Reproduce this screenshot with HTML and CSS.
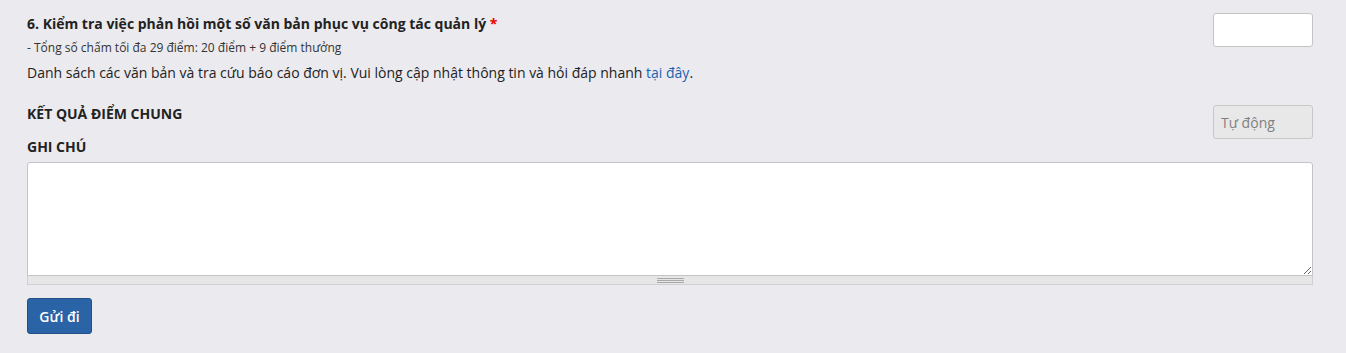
FILE: index.html
```html
<!DOCTYPE html>
<html lang="vi">
<head>
<meta charset="utf-8">
<title>Form</title>
<link rel="stylesheet" href="styles.css">
</head>
<body>
<form class="page">
  <div class="row question">
    <div class="q-text">
      <div class="q-title">6. Kiểm tra việc phản hồi một số văn bản phục vụ công tác quản lý <span class="req">*</span></div>
      <div class="q-sub">- Tổng số chấm tối đa 29 điểm: 20 điểm + 9 điểm thưởng</div>
      <div class="q-desc">Danh sách các văn bản và tra cứu báo cáo đơn vị. Vui lòng cập nhật thông tin và hỏi đáp nhanh <a href="#">tại đây</a>.</div>
    </div>
    <input class="score" type="text">
  </div>
  <div class="row total">
    <div class="label">KẾT QUẢ ĐIỂM CHUNG</div>
    <input class="score auto" type="text" placeholder="Tự động" disabled>
  </div>
  <div class="label note-label">GHI CHÚ</div>
  <div class="note">
    <textarea class="note-area"></textarea>
    <div class="grippie"><span></span></div>
  </div>
  <button class="submit" type="button">Gửi đi</button>
</form>
</body>
</html>
```
FILE: styles.css
```css
html, body {
  margin: 0;
  padding: 0;
  background: #ebeaef;
}
body {
  font-family: "Open Sans", "Liberation Sans", sans-serif;
  color: #222;
}
.page {
  padding: 13px 33px 19px 27px;
  display: flex;
  flex-direction: column;
}
.row {
  display: flex;
  justify-content: space-between;
  align-items: flex-start;
}
.q-title {
  font-size: 14px;
  font-weight: 700;
  line-height: 22px;
}
.req {
  color: #e00;
}
.q-sub {
  font-size: 12px;
  line-height: 18px;
  margin-top: 4px;
  color: #333;
}
.q-desc {
  font-size: 14px;
  line-height: 22px;
  margin-top: 5px;
}
.q-desc a {
  color: #1a63b0;
  text-decoration: none;
}
.score {
  width: 100px;
  height: 34px;
  box-sizing: border-box;
  border: 1px solid #c4c4c4;
  border-radius: 3px;
  background: #fff;
  padding: 0 7px;
  font-family: inherit;
  font-size: 14px;
}
.total {
  margin-top: 21px;
}
.label {
  font-size: 14px;
  font-weight: 700;
  line-height: 18px;
  color: #222;
}
.auto {
  background: #e8e8e8;
  border-color: #c8c8c8;
}
.auto::placeholder {
  color: #808080;
  opacity: 1;
}
.note-label {
  margin-top: -1px;
}
.note {
  margin-top: 6px;
  display: flex;
  flex-direction: column;
}
.note-area {
  display: block;
  height: 114px;
  box-sizing: border-box;
  border: 1px solid #c4c4c4;
  border-radius: 3px 3px 0 0;
  background: #fff;
  margin: 0;
  resize: vertical;
  font-family: inherit;
  font-size: 14px;
}
.grippie {
  height: 9px;
  box-sizing: border-box;
  background: #e6e6e6;
  border: 1px solid #d0d0d0;
  border-top: 0;
  display: flex;
  justify-content: center;
  align-items: center;
}
.grippie span {
  width: 27px;
  height: 5px;
  background: repeating-linear-gradient(to bottom, #a8a8a8 0 1px, transparent 1px 2px);
}
.submit {
  align-self: flex-start;
  margin-top: 13px;
  width: 65px;
  height: 36px;
  background: #2a63a6;
  border: 1px solid #234f88;
  border-radius: 3px;
  color: #fff;
  font-family: inherit;
  font-size: 14px;
  font-weight: 600;
  padding: 0;
}
```
